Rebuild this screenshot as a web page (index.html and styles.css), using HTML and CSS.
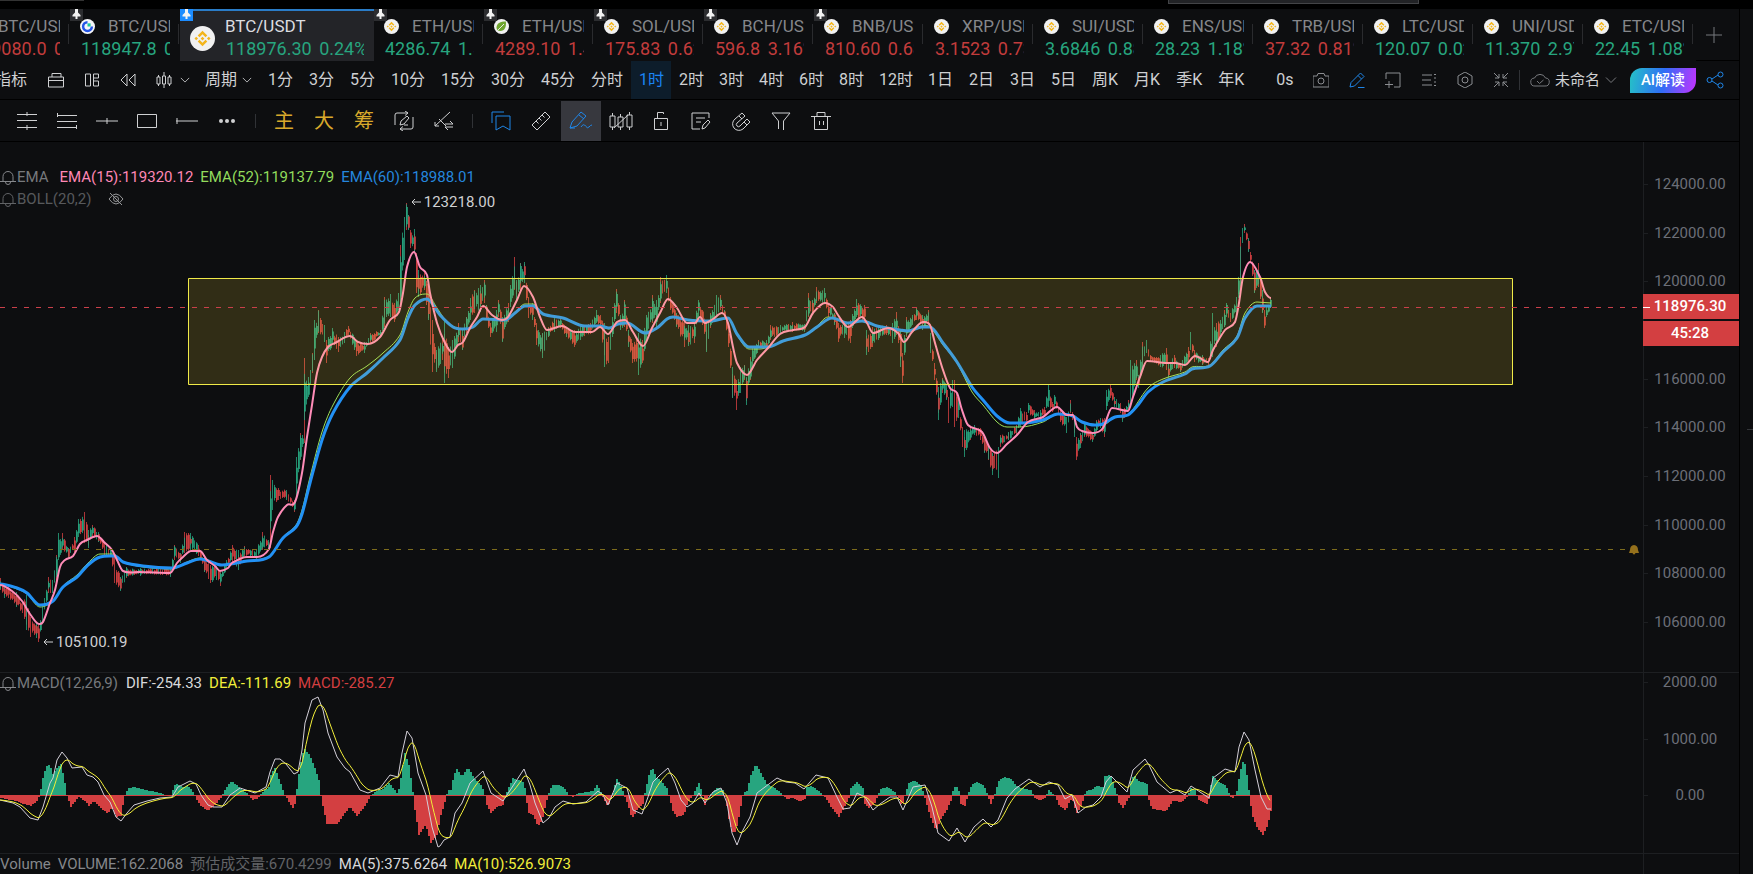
FILE: index.html
```
<!DOCTYPE html>
<html lang="zh-CN">
<head>
  <meta charset="utf-8">
  <title>BTC/USDT 118976.30</title>
  <link rel="stylesheet" href="styles.css">
</head>
<body>
  <svg class="sprite" xmlns="http://www.w3.org/2000/svg">
    <symbol id="bnb" viewBox="0 0 24 24">
      <circle cx="12" cy="12" r="12" fill="#f1f1f1"/>
      <g fill="#f3b51c">
        <path d="M12 4.500l4.600 4.600-1.700 1.700L12 7.900l-2.900 2.900-1.700-1.700zM12 19.500l4.600-4.600-1.700-1.700-2.900 2.900-2.900-2.900-1.700 1.700z"/>
        <path d="M12 10.200l1.800 1.800-1.800 1.800-1.800-1.800zM6 10.300L7.700 12 6 13.700 4.300 12zM18 10.300l1.700 1.700-1.700 1.700-1.700-1.700z"/>
      </g>
    </symbol>
    <symbol id="gate" viewBox="0 0 24 24">
      <circle cx="12" cy="12" r="12" fill="#f4f5f8"/>
      <path d="M12 5a7 7 0 1 0 7 7" fill="none" stroke="#2354e6" stroke-width="4"/>
      <path d="M12 7h5v5h-5z" fill="#17c99b"/>
    </symbol>
    <symbol id="leaf" viewBox="0 0 24 24">
      <circle cx="12" cy="12" r="12" fill="#f1f1f1"/>
      <path d="M4 14C4 7 10 4 19 4c1 9-2 15-9 15-4 0-6-2-6-5z" fill="#6fa52f"/>
      <path d="M6 18L16 8" stroke="#f1f1f1" stroke-width="1.500"/>
    </symbol>
    <symbol id="pin" viewBox="0 0 13 12">
      <path d="M5 0h3v3.500L10.500 6v1.500H7.500V10h-2V7.500h-3V6L5 3.500z" fill="#f2f2f2"/>
    </symbol>
    <symbol id="chevron" viewBox="0 0 12 8">
      <path d="M1 1.500l5 5 5-5"/>
    </symbol>
    <symbol id="bell" viewBox="0 0 16 16">
      <path d="M3 12V7.500a5 5 0 0 1 10 0V12M0 12.500h16M5.500 13a2.500 2.500 0 0 0 5 0"/>
    </symbol>
  </svg>

  <div class="window-top">
    <span class="window-line"></span>
    <span class="window-panel"></span>
  </div>

  <div class="workspace">
    <main class="terminal">
      <nav class="tabs">
        <div class="tab-list">
          <button class="tab">
            <svg class="coin"><use href="#bnb"/></svg><span class="name">BTC/USDT</span>
            <span class="quote down">119080.0 <span>0.12%</span></span>
          </button>
          <button class="tab">
            <svg class="pin"><use href="#pin"/></svg>
            <svg class="coin"><use href="#gate"/></svg><span class="name">BTC/USDT</span>
            <span class="quote up">118947.8 <span>0.21%</span></span>
          </button>
          <button class="tab active">
            <svg class="pin"><use href="#pin"/></svg>
            <svg class="coin"><use href="#bnb"/></svg><span class="name">BTC/USDT</span>
            <span class="quote up">118976.30 <span>0.24%</span></span>
          </button>
          <button class="tab">
            <svg class="pin"><use href="#pin"/></svg>
            <svg class="coin"><use href="#bnb"/></svg><span class="name">ETH/USDT</span>
            <span class="quote up">4286.74 <span>1.50%</span></span>
          </button>
          <button class="tab">
            <svg class="pin"><use href="#pin"/></svg>
            <svg class="coin"><use href="#leaf"/></svg><span class="name">ETH/USDT</span>
            <span class="quote down">4289.10 <span>1.42%</span></span>
          </button>
          <button class="tab">
            <svg class="pin"><use href="#pin"/></svg>
            <svg class="coin"><use href="#bnb"/></svg><span class="name">SOL/USDT</span>
            <span class="quote down">175.83 <span>0.62%</span></span>
          </button>
          <button class="tab">
            <svg class="pin"><use href="#pin"/></svg>
            <svg class="coin"><use href="#bnb"/></svg><span class="name">BCH/USDT</span>
            <span class="quote down">596.8 <span>3.16%</span></span>
          </button>
          <button class="tab">
            <svg class="pin"><use href="#pin"/></svg>
            <svg class="coin"><use href="#bnb"/></svg><span class="name">BNB/USDT</span>
            <span class="quote down">810.60 <span>0.68%</span></span>
          </button>
          <button class="tab">
            <svg class="coin"><use href="#bnb"/></svg><span class="name">XRP/USDT</span>
            <span class="quote down">3.1523 <span>0.73%</span></span>
          </button>
          <button class="tab">
            <svg class="coin"><use href="#bnb"/></svg><span class="name">SUI/USDT</span>
            <span class="quote up">3.6846 <span>0.88%</span></span>
          </button>
          <button class="tab">
            <svg class="coin"><use href="#bnb"/></svg><span class="name">ENS/USDT</span>
            <span class="quote up">28.23 <span>1.18%</span></span>
          </button>
          <button class="tab">
            <svg class="coin"><use href="#bnb"/></svg><span class="name">TRB/USDT</span>
            <span class="quote down">37.32 <span>0.81%</span></span>
          </button>
          <button class="tab">
            <svg class="coin"><use href="#bnb"/></svg><span class="name">LTC/USDT</span>
            <span class="quote up">120.07 <span>0.02%</span></span>
          </button>
          <button class="tab">
            <svg class="coin"><use href="#bnb"/></svg><span class="name">UNI/USDT</span>
            <span class="quote up">11.370 <span>2.97%</span></span>
          </button>
          <button class="tab">
            <svg class="coin"><use href="#bnb"/></svg><span class="name">ETC/USDT</span>
            <span class="quote up">22.45 <span>1.08%</span></span>
          </button>
        </div>
        <button class="add-tab" aria-label="添加">
          <svg class="icon" viewBox="0 0 16 16"><path d="M8 0v16M0 8h16"/></svg>
        </button>
      </nav>

      <div class="toolbar">
        <button class="label indicators">指标</button>
        <button class="tool" aria-label="模板"><svg class="icon" viewBox="0 0 16 16"><path d="M.5 5h15v10H.5zM.5 8.500h15M4 5V1.500h9V5"/></svg></button>
        <button class="tool" aria-label="布局"><svg class="icon" viewBox="0 0 16 16"><path d="M1.500 2h5v12h-5zM9.500 2h5v4h-5zM9.500 9h5v5h-5zM9.500 6v3"/></svg></button>
        <button class="tool" aria-label="回放"><svg class="icon" viewBox="0 0 16 16"><path d="M7 2v12L1 8zM15 2v12L9 8z"/></svg></button>
        <button class="menu" aria-label="K线类型">
          <svg class="icon" viewBox="0 0 16 16"><path d="M1 5h3v7H1zM6.500 4h3v8h-3zM12 5h3v7h-3zM2.500 3v2M2.500 12v2M8 0v4M8 12v4M13.500 3v2M13.500 12v2"/></svg>
          <svg class="icon chevron"><use href="#chevron"/></svg>
        </button>
        <button class="menu period">周期 <svg class="icon chevron"><use href="#chevron"/></svg></button>
        <div class="intervals">
          <button>1分</button>
          <button>3分</button>
          <button>5分</button>
          <button>10分</button>
          <button>15分</button>
          <button>30分</button>
          <button>45分</button>
          <button>分时</button>
        </div>
        <div class="intervals hours">
          <button class="active">1时</button>
          <button>2时</button>
          <button>3时</button>
          <button>4时</button>
          <button>6时</button>
          <button>8时</button>
          <button>12时</button>
        </div>
        <div class="intervals">
          <button>1日</button>
          <button>2日</button>
          <button>3日</button>
          <button>5日</button>
          <button>周K</button>
          <button>月K</button>
          <button>季K</button>
          <button>年K</button>
        </div>

        <div class="actions">
          <button class="tool label">0s</button>
          <button class="tool dim" aria-label="截图"><svg class="icon" viewBox="0 0 16 16"><path d="M0 4h4l1-2.500h6L12 4h4v11H0zM11 9a3 3 0 1 1-6 0 3 3 0 0 1 6 0z"/></svg></button>
          <button class="tool blue" aria-label="画线"><svg class="icon" viewBox="0 0 16 16"><path d="M1 15l1-4.500L11.500 1l3.500 3.500L5.500 14zM9 3.500L12.500 7M9 15.500h6.500"/></svg></button>
          <button class="tool dim" aria-label="添加窗格"><svg class="icon" viewBox="0 0 16 16"><path d="M1 7V1h14v14H9M4 9v7M0 12.500h8"/></svg></button>
          <button class="tool dim" aria-label="列表"><svg class="icon" viewBox="0 0 16 16"><path d="M1 3h10M1 8h9M1 13h10M13 2.500h2M13 6h2M13 10h2M13 13.500h2"/></svg></button>
          <button class="tool dim" aria-label="设置"><svg class="icon" viewBox="0 0 16 16"><path d="M8 0l7 4v8l-7 4-7-4V4zM11 8a3 3 0 1 1-6 0 3 3 0 0 1 6 0z"/></svg></button>
          <button class="tool dim" aria-label="退出全屏"><svg class="icon" viewBox="0 0 16 16"><path d="M1 1l5 5M6 2v4H2M15 1l-5 5M10 2v4h4M1 15l5-5M6 14v-4H2M15 15l-5-5M10 14v-4h4"/></svg></button>
          <span class="divider"></span>
          <button class="layout-name">
            <svg class="icon cloud" viewBox="0 0 20 16"><path d="M5 14a4 4 0 0 1-.5-8 6 6 0 0 1 11 0 4 4 0 0 1-.5 8zM7 9l2.500 2.500L13.500 8"/></svg>
            未命名
            <svg class="icon chevron"><use href="#chevron"/></svg>
          </button>
          <button class="ai">AI解读</button>
          <button class="share blue" aria-label="分享"><svg class="icon" viewBox="0 0 18 18"><path d="M6 8l6-4M6 10l6 4M6 9a2.500 2.500 0 1 1-5 0 2.500 2.500 0 0 1 5 0zM17 3.500a2.500 2.500 0 1 1-5 0 2.500 2.500 0 0 1 5 0zM17 14.500a2.500 2.500 0 1 1-5 0 2.500 2.500 0 0 1 5 0z"/></svg></button>
        </div>
      </div>

      <div class="drawbar">
        <button aria-label="平行线"><svg class="icon" viewBox="0 0 20 20"><path d="M0 3.500h20M0 9.500h20M0 16.500h20M10 1v4M10 14v5"/></svg></button>
        <button aria-label="通道"><svg class="icon" viewBox="0 0 20 20"><path d="M0 4.500h20M0 10.500h20M0 16.500h20M.5 2v4M19.500 14v4"/></svg></button>
        <button aria-label="水平线"><svg class="icon wide" viewBox="0 0 22 20"><path d="M0 10h22M11 7v6"/></svg></button>
        <button aria-label="矩形"><svg class="icon" viewBox="0 0 20 20"><path d="M.5 3.500h19v13H.5z"/></svg></button>
        <button aria-label="射线"><svg class="icon wide" viewBox="0 0 22 20"><path d="M0 10h22M1 7v6"/></svg></button>
        <button aria-label="更多"><svg class="icon solid" viewBox="0 0 20 20"><circle cx="4" cy="10" r="2"/><circle cx="10" cy="10" r="2"/><circle cx="16" cy="10" r="2"/></svg></button>
        <span class="divider"></span>
        <button class="gold">主</button>
        <button class="gold">大</button>
        <button class="gold">筹</button>
        <button aria-label="同步画线"><svg class="icon" viewBox="0 0 20 20"><path d="M1 14V4q0-2 2-2h11M11 0l3 2-3 2.500M19 6v10q0 2-2 2H6M9 15.500L6 18l3 2M6 14l1-4 6-5 2 2-5 6zM10 14h4"/></svg></button>
        <button aria-label="切换画线"><svg class="icon" viewBox="0 0 20 20"><path d="M1 15L16 1M1 11v4h4M5 8l7 7M11 13h8l-3-3M19 16h-8l3 3"/></svg></button>
        <span class="divider"></span>
        <button class="blue" aria-label="收藏"><svg class="icon" viewBox="0 0 20 20"><path d="M5 5h14v14l-7-4-7 4zM1 12V1h12"/></svg></button>
        <button aria-label="测量"><svg class="icon" viewBox="0 0 20 20"><path d="M1 14L14 1l5 5L6 19zM5 10l2.500 2.500M8 7l2.500 2.500M11 4l2.500 2.500"/></svg></button>
        <button class="blue active" aria-label="画笔"><svg class="icon pen" viewBox="0 0 24 20"><path d="M1 17l2-6L12 1l5 4-9 10zM10 4l5 4M1 17h5M12 16q2.500-4 4.500-1t3.500 1 3-2"/></svg></button>
        <button aria-label="K线"><svg class="icon pen" viewBox="0 0 24 20"><path d="M1 5h5v11H1zM9 6h5v10H9zM18 4h5v12h-5zM3.500 2v3M3.500 16v3M11.500 3v3M11.500 16v3M20.500 1v3M20.500 16v3M5 17L19 4"/></svg></button>
        <button aria-label="锁定"><svg class="icon" viewBox="0 0 20 20"><path d="M3.500 7.500h13v11h-13zM6.500 7V1.500h6V3M10 11v4"/></svg></button>
        <button aria-label="笔记"><svg class="icon" viewBox="0 0 20 20"><path d="M9 18H1V2h17v5M5 7h9M5 11h5M11 18l1-4 5-5 2 2-5 6z"/></svg></button>
        <button aria-label="磁铁"><svg class="icon" viewBox="0 0 20 20"><path d="M11 2L4 8a6 6 0 0 0 8 10l7-7-3-3-7 7a2 2 0 0 1-3-3l8-7zM8 5l3 3M13 11l3 3"/></svg></button>
        <button aria-label="筛选"><svg class="icon" viewBox="0 0 20 20"><path d="M1 2h18l-6.500 8v9M1 2l6.500 8v8"/></svg></button>
        <button aria-label="删除"><svg class="icon" viewBox="0 0 20 20"><path d="M0 5.500h20M3.500 5.500v13h13v-13M6 5V1.500h8V5M8.500 10v4M12.500 10v4"/></svg></button>
      </div>

      <section class="pane price-pane">
        <div class="plot">
          <svg id="price" class="chart" viewBox="0 0 1643 530" preserveAspectRatio="none">
            <path id="candles-down" class="candle down"/>
            <path id="candles-up" class="candle up"/>
            <path id="bodies-down" class="body down"/>
            <path id="bodies-up" class="body up"/>
            <path id="ema52" class="ema52"/>
            <path id="ema60" class="ema60"/>
            <path id="ema15" class="ema15"/>
            <rect class="zone" x="188.500" y="136.500" width="1324" height="106"/>
            <path class="last-price" d="M0 165.500H1643"/>
            <path class="alert" d="M0 407.500H1628"/>
          </svg>
          <div class="legend">
            <div class="row">
              <svg class="icon bell"><use href="#bell"/></svg><span class="title">EMA</span>
              <span class="pink">EMA(15):119320.12</span>
              <span class="lime">EMA(52):119137.79</span>
              <span class="sky">EMA(60):118988.01</span>
            </div>
            <div class="row faded">
              <svg class="icon bell"><use href="#bell"/></svg><span class="title">BOLL(20,2)</span>
              <svg class="icon eye" viewBox="0 0 16 16"><path d="M1 8q7-10 14 0-7 10-14 0zM10.500 8a2.500 2.500 0 1 1-5 0 2.500 2.500 0 0 1 5 0zM2 2l12 12"/></svg>
            </div>
          </div>
          <span class="mark high"><svg class="icon" viewBox="0 0 10 8"><path d="M10 4H1M4 1L1 4l3 3"/></svg>123218.00</span>
          <span class="mark low"><svg class="icon" viewBox="0 0 10 8"><path d="M10 4H1M4 1L1 4l3 3"/></svg>105100.19</span>
          <svg class="alert-bell" viewBox="0 0 10 10"><path d="M5 0q4 .5 4 5l1 3H6.500q-1.500 3-3 0H0l1-3q0-4.500 4-5z"/></svg>
        </div>
        <div class="axis price-axis">
          <span>124000.00</span>
          <span>122000.00</span>
          <span>120000.00</span>
          <span class="blank"></span>
          <span>116000.00</span>
          <span>114000.00</span>
          <span>112000.00</span>
          <span>110000.00</span>
          <span>108000.00</span>
          <span>106000.00</span>
          <div class="tag">
            <b>118976.30</b>
            <b>45:28</b>
          </div>
        </div>
      </section>

      <section class="pane macd-pane">
        <div class="plot">
          <svg id="macd" class="chart" viewBox="0 0 1643 180" preserveAspectRatio="none">
            <path id="hist-down" class="hist down"/>
            <path id="hist-up" class="hist up"/>
            <path id="dif" class="dif"/>
            <path id="dea" class="dea"/>
          </svg>
          <div class="legend">
            <div class="row">
              <svg class="icon bell"><use href="#bell"/></svg><span class="title">MACD(12,26,9)</span>
              <span class="white">DIF:-254.33</span>
              <span class="yellow">DEA:-111.69</span>
              <span class="red">MACD:-285.27</span>
            </div>
          </div>
        </div>
        <div class="axis macd-axis">
          <span>2000.00</span>
          <span>1000.00</span>
          <span>0.00</span>
        </div>
      </section>

      <section class="pane volume-pane">
        <div class="plot">
          <div class="row">
            <span>Volume</span>
            <span>VOLUME:162.2068</span>
            <span class="faded">预估成交量:670.4299</span>
            <span class="white">MA(5):375.6264</span>
            <span class="yellow">MA(10):526.9073</span>
          </div>
        </div>
        <div class="axis"></div>
      </section>
    </main>
    <aside class="side"><span class="handle"></span></aside>
  </div>

  <script src="chart.js"></script>
</body>
</html>
```
FILE: styles.css
```
:root {
  --bg: #0d0e10;
  --line: #000;
  --grid: #1d1f22;
  --text: #cfd0d2;
  --muted: #85878b;
  --axis: #6c6f78;
  --green: #27a57f;
  --red: #d33f41;
  --blue: #1f86e8;
  --yellow: #f2ee3a;
}

* {
  box-sizing: border-box;
}

body {
  margin: 0;
  height: 100vh;
  display: flex;
  flex-direction: column;
  overflow: hidden;
  background: var(--bg);
  color: var(--text);
  font: 15px/18px Roboto, "Noto Sans CJK SC", sans-serif;
}

button {
  margin: 0;
  padding: 0;
  border: 0;
  background: none;
  color: inherit;
  font: inherit;
  white-space: nowrap;
  cursor: pointer;
}

.sprite {
  display: none;
}

.icon {
  display: block;
  flex: none;
  width: 16px;
  height: 16px;
  fill: none;
  stroke: currentColor;
}

.icon.chevron {
  width: 10px;
  height: 8px;
}

.window-top {
  flex: none;
  height: 9px;
  display: flex;
  justify-content: space-between;
  align-items: flex-start;
  background: #000;
}

.window-line {
  width: 84px;
  height: 1px;
  background: #333;
}

.window-panel {
  width: 251px;
  height: 4px;
  margin-right: 334px;
  border: 1px solid #434447;
  border-top: 0;
  background: #222326;
}

.workspace {
  flex: 1;
  min-height: 0;
  display: flex;
}

.terminal {
  flex: 1;
  min-width: 0;
  display: flex;
  flex-direction: column;
}

.side {
  flex: none;
  width: 14px;
  padding-bottom: 24px;
  border-left: 1px solid var(--line);
  display: flex;
  align-items: center;
  justify-content: flex-end;
}

.handle {
  width: 6px;
  height: 1px;
  background: #34363a;
}

/* symbol tabs */
.tabs {
  flex: none;
  height: 52px;
  display: flex;
}

.tab-list {
  flex: 1;
  min-width: 0;
  display: flex;
  overflow: hidden;
}

.tab {
  position: relative;
  flex: none;
  width: 110px;
  padding: 6px 10px 0;
  display: grid;
  grid-template-columns: 15px 1fr;
  grid-template-rows: 22px 24px;
  column-gap: 13px;
  align-items: center;
  text-align: left;
}

.tab:first-child {
  margin-left: -40px;
}

.tab::after {
  content: '';
  position: absolute;
  right: 1px;
  top: 15px;
  width: 1px;
  height: 20px;
  background: #2a2b2e;
}

.coin {
  width: 15px;
  height: 15px;
}

.name {
  overflow: hidden;
  color: var(--muted);
  font-size: 17px;
  line-height: 22px;
}

.quote {
  grid-column: 1 / 3;
  padding-left: 1px;
  overflow: hidden;
  font-size: 18px;
  line-height: 24px;
}

.quote span {
  margin-left: 3px;
}

.quote.up {
  color: var(--green);
}

.quote.down {
  color: #c23c3c;
}

.pin {
  position: absolute;
  left: 0;
  top: 0;
  width: 13px;
  height: 12px;
  background: #2c2d30;
}

.tab.active {
  width: 194px;
  padding-top: 4px;
  border-top: 2px solid #2a7cc7;
  grid-template-columns: 25px 1fr;
  column-gap: 10px;
  background: #232428;
}

.tab.active::after {
  display: none;
}

.tab.active .coin {
  grid-row: 1 / 3;
  width: 25px;
  height: 25px;
}

.tab.active .name {
  color: #dcdde0;
}

.tab.active .quote {
  grid-column: 2;
}

.tab.active .pin {
  top: -2px;
  background: #1c8cff;
}

.add-tab {
  width: 43px;
  margin-left: 2px;
  padding-left: 10px;
  border-bottom: 1px solid var(--line);
  color: #77797d;
}

/* period toolbar */
.toolbar {
  flex: none;
  height: 39px;
  display: flex;
  align-items: stretch;
  border-bottom: 1px solid var(--line);
  font-size: 16px;
}

.indicators {
  margin-left: -5px;
  padding-right: 11px;
}

.tool {
  width: 36px;
  display: flex;
  align-items: center;
  justify-content: center;
}

.menu {
  padding: 0 7px 0 10px;
  display: flex;
  align-items: center;
  gap: 8px;
}

.menu.period {
  gap: 5px;
  padding: 0 8px;
}

.intervals {
  display: flex;
}

.intervals button {
  padding: 0 8px;
}

.intervals.hours button {
  padding-right: 7px;
}

.intervals .active {
  background: #0d1d2b;
  color: #1a84f5;
}

.actions {
  margin-left: auto;
  padding-right: 15px;
  display: flex;
  align-items: center;
}

.dim {
  color: #8b8d91;
}

.blue {
  color: var(--blue);
}

.divider {
  flex: none;
  width: 1px;
  height: 20px;
  background: #303236;
}

.layout-name {
  padding: 0 13px 0 10px;
  display: flex;
  align-items: center;
  gap: 5px;
  font-size: 15px;
}

.layout-name .icon {
  color: #77797d;
}

.layout-name .chevron {
  width: 12px;
}

.icon.cloud {
  width: 20px;
}

.ai {
  width: 66px;
  height: 25px;
  border-radius: 12px 0;
  background: linear-gradient(100deg, #25c3c6, #2f6df6 50%, #c532ff);
  color: #fff;
  font-size: 15px;
  font-weight: 500;
}

.share {
  margin-left: 10px;
}

.share .icon {
  width: 18px;
  height: 18px;
}

/* drawing toolbar */
.drawbar {
  flex: none;
  height: 42px;
  padding-left: 7px;
  display: flex;
  align-items: center;
  border-bottom: 1px solid var(--line);
}

.drawbar button {
  width: 40px;
  height: 40px;
  display: flex;
  align-items: center;
  justify-content: center;
}

.drawbar .icon {
  width: 20px;
  height: 20px;
}

.drawbar .icon.wide {
  width: 22px;
}

.drawbar .icon.pen {
  width: 24px;
}

.drawbar .icon.solid {
  fill: currentColor;
  stroke: none;
}

.drawbar .divider {
  height: 14px;
  margin: 0 8px;
}

.drawbar .active {
  background: #37383e;
}

.gold {
  color: #d9a92b;
  font-size: 20px;
}

/* chart panes */
.pane {
  display: flex;
  min-height: 0;
}

.price-pane {
  flex: 530;
}

.macd-pane {
  flex: 180;
  border-top: 1px solid var(--grid);
}

.volume-pane {
  flex: none;
  height: 21px;
  border-top: 1px solid var(--grid);
  color: var(--muted);
}

.plot {
  position: relative;
  flex: 1;
  min-width: 0;
}

.chart {
  position: absolute;
  inset: 0;
  width: 100%;
  height: 100%;
}

.chart path,
.chart rect {
  fill: none;
  vector-effect: non-scaling-stroke;
}

.candle,
.body {
  opacity: 0.8;
}

.candle {
  stroke-width: 1;
}

.body {
  stroke-width: 2;
}

.candle.up,
.body.up {
  stroke: var(--green);
}

.candle.down,
.body.down {
  stroke: var(--red);
}

.chart .hist {
  shape-rendering: crispEdges;
}

.chart .hist.up {
  fill: var(--green);
}

.chart .hist.down {
  fill: var(--red);
}

.ema15 {
  stroke: #ff8cb8;
  stroke-width: 2;
}

.ema52 {
  stroke: #9be05a;
}

.ema60 {
  stroke: #2291f5;
  stroke-width: 3;
}

.ema15,
.ema60 {
  stroke-linejoin: round;
}

.chart .zone {
  fill: rgba(255, 225, 59, 0.15);
  stroke: #f0ea48;
}

.last-price {
  stroke: #c9404a;
  stroke-dasharray: 5 7;
}

.alert {
  stroke: #7d6c1d;
  stroke-dasharray: 5 7;
}

.dif {
  stroke: #d3cfd8;
}

.dea {
  stroke: var(--yellow);
}

.legend {
  position: relative;
}

.price-pane .legend {
  padding-top: 24px;
}

.row {
  display: flex;
  align-items: center;
  gap: 7px;
  height: 22px;
  white-space: nowrap;
}

.macd-pane .row,
.volume-pane .row {
  height: 20px;
}

.legend .bell {
  margin-right: -6px;
  color: var(--muted);
}

.legend .title {
  margin-right: 1px;
  color: #77797d;
}

.price-pane .title {
  margin-right: 4px;
}

.row.faded,
.row .faded {
  opacity: 0.7;
}

.eye {
  margin-left: 6px;
}

.pink {
  color: #ff87b5;
}

.lime {
  color: #92dc5c;
}

.sky {
  color: #2586dd;
}

.white {
  color: #d8d9db;
}

.yellow {
  color: var(--yellow);
}

.red {
  color: var(--red);
}

/* labels pinned to the extremes of the series */
.mark {
  position: absolute;
  display: flex;
  align-items: center;
  gap: 3px;
  line-height: 14px;
}

.mark .icon {
  width: 10px;
  height: 8px;
}

.mark.high {
  left: 25%;
  top: 10%;
}

.mark.low {
  left: 43px;
  top: 93%;
}

.alert-bell {
  position: absolute;
  right: 4px;
  top: 76%;
  width: 10px;
  height: 10px;
  fill: #94701c;
}

.axis {
  position: relative;
  flex: none;
  width: 96px;
  border-left: 1px solid var(--grid);
  display: flex;
  flex-direction: column;
  justify-content: space-between;
  color: var(--axis);
  text-align: center;
}

.axis span {
  position: relative;
  height: 18px;
  padding-right: 3px;
}

.axis span::before {
  content: '';
  position: absolute;
  left: 0;
  top: 9px;
  width: 4px;
  height: 1px;
  background: var(--grid);
}

.price-axis {
  padding: 33px 0 41px;
}

.macd-axis {
  padding-bottom: 49px;
}

.tag {
  position: absolute;
  left: -1px;
  right: 0;
  top: 152px;
  display: grid;
  gap: 2px;
  color: #fff;
}

.tag b {
  position: relative;
  padding-right: 2px;
  background: var(--red);
  font-weight: 500;
  line-height: 25px;
}

.tag b:first-child::before {
  content: '';
  position: absolute;
  left: 0;
  top: 13px;
  width: 7px;
  height: 1px;
  background: #fff;
}
```
FILE: chart.js
```
// Series are stored as "x,y" pairs in plot coordinates.
const ema15 = `0,585 12,591 22,601 30,614 39,624 43,622 50,603 55,590 60,567 65,560 73,556 80,544 87,540
97,536 105,543 112,550 117,560 123,571 140,572 170,573 177,563 183,557 191,551 200,551 207,560 215,566
220,571 228,568 232,563 247,557 257,557 269,549 273,532 278,517 287,505 295,502 302,473 307,437 312,405
317,373 322,357 328,347 335,343 350,336 358,342 368,344 380,337 390,320 399,312 403,293 407,267 414,252
420,267 427,275 430,293 437,323 445,343 452,352 458,345 463,342 470,328 477,317 483,306 492,315 502,320
508,317 517,300 524,286 533,297 540,317 547,330 562,326 575,332 592,332 600,327 608,334 617,322 625,320
633,332 643,346 652,328 660,313 668,299 677,308 687,323 695,323 700,317 705,323 713,319 722,313 728,323
733,347 737,363 747,375 757,360 768,348 780,334 793,330 805,327 813,313 825,303 833,307 838,315 848,327
862,317 867,323 873,333 888,328 898,333 904,342 912,332 923,322 930,325 935,343 942,367 950,388 957,393
962,410 968,425 982,432 990,448 997,453 1007,444 1017,435 1028,422 1043,417 1057,407 1067,415 1073,415
1077,427 1082,431 1093,433 1103,428 1112,408 1128,411 1133,397 1140,377 1147,361 1167,363 1175,363
1185,365 1195,356 1208,362 1213,350 1225,330 1235,322 1239,303 1243,277 1250,262 1260,277 1265,292 1271,298`;

const ema60 = `0,584 17,588 27,593 40,605 53,601 63,587 77,577 88,565 100,557 115,556 123,562 143,566
172,568 187,563 200,559 222,565 247,561 269,557 283,538 296,527 302,514 310,483 322,440 333,413 350,387
367,373 383,358 400,340 408,318 415,305 427,299 440,315 453,327 463,329 473,327 483,319 505,320 515,313
525,306 533,306 543,314 563,318 585,326 600,326 609,328 618,324 627,323 645,333 657,328 667,319 673,317
688,320 710,321 728,318 737,334 749,347 768,347 783,341 805,335 817,327 832,318 848,323 862,321 877,326
900,330 908,331 922,327 930,327 943,343 957,362 972,387 983,400 997,416 1010,423 1023,423 1043,420
1058,414 1073,416 1082,422 1095,425 1103,424 1115,417 1128,415 1138,405 1148,392 1163,382 1185,374
1192,369 1210,366 1223,352 1237,338 1245,318 1257,306 1271,306`;

const ema52 = `0,584 17,589 27,594 40,607 53,601 63,586 77,575 88,563 100,554 113,554 123,562 143,567
172,569 187,562 200,558 222,565 247,561 269,556 283,537 296,525 302,510 310,477 322,432 333,405 350,378
367,366 383,353 400,335 408,312 415,298 427,294 437,308 448,323 463,329 473,327 483,319 505,320 515,312
525,304 533,304 543,314 563,318 585,326 600,326 609,329 618,324 627,323 645,333 657,328 667,319 673,317
688,320 710,321 728,318 737,335 749,349 760,349 768,347 783,341 805,335 817,326 828,317 848,323 862,321
877,326 900,331 908,332 922,326 930,327 943,345 957,363 972,392 983,405 997,422 1007,427 1020,427
1043,422 1058,414 1073,416 1082,422 1103,425 1115,417 1128,415 1148,388 1163,379 1185,372 1192,367
1210,365 1223,350 1237,336 1245,313 1257,302 1271,303`;

// x,high,low
const range = `0,578,590 4,585,598 8,587,598 15,592,607 22,603,613 25,595,630 30,617,637 35,623,638 38,625,642
42,607,622 48,577,593 52,580,593 55,555,580 57,533,560 62,533,550 68,548,558 73,537,552 78,519,537
83,512,543 87,530,548 92,525,537 98,532,542 103,542,557 110,547,557 114,557,583 120,577,591 126,567,578
140,568,576 160,568,575 170,568,577 173,545,560 180,553,563 183,532,553 190,533,550 197,545,556
203,558,572 209,565,583 215,566,580 219,572,586 225,560,568 232,545,563 237,550,570 243,546,556
255,550,560 262,532,550 268,540,548 270,475,548 272,480,510 278,488,500 286,490,500 293,500,512
296,457,497 299,433,460 302,435,447 304,358,443 307,377,397 311,353,373 314,320,360 318,310,333
323,325,342 326,340,363 331,328,345 337,337,352 343,332,343 348,326,335 353,337,350 356,340,356
363,342,353 370,333,343 380,330,336 384,297,327 390,294,317 394,303,322 398,293,310 400,245,303
403,217,260 405,203,230 408,215,230 410,230,248 413,229,253 416,253,293 418,270,297 424,272,290
428,280,320 431,320,372 436,350,372 441,337,360 444,320,383 448,347,378 452,340,368 457,323,342
462,330,350 466,317,333 469,298,320 474,290,313 480,285,312 483,280,303 486,305,320 489,323,337
495,310,332 498,300,317 502,317,342 508,303,322 510,285,307 513,257,290 516,280,300 519,263,290
524,262,283 527,297,318 532,303,320 535,323,345 541,333,358 547,327,337 553,318,332 560,318,328
566,327,337 573,330,347 580,325,340 590,323,334 596,310,323 600,315,328 604,323,367 607,337,363
611,317,337 615,289,313 619,315,330 624,300,327 628,330,347 632,343,363 638,333,375 642,340,363
646,315,340 651,295,323 655,300,330 660,277,303 666,275,293 670,297,310 676,313,327 683,320,347
688,325,346 693,320,343 698,300,317 701,310,325 705,323,352 710,313,328 715,295,317 719,295,310
724,310,320 728,327,347 731,367,398 735,380,410 739,367,393 743,365,380 746,377,405 749,357,380
752,347,367 757,340,348 766,340,350 770,325,340 780,325,333 792,322,332 803,324,332 807,293,317
812,300,315 815,287,303 823,288,303 828,303,317 833,313,325 838,323,342 844,322,338 849,320,343
855,299,317 863,305,323 866,330,355 872,327,347 878,325,340 885,325,335 892,323,343 896,312,335
899,330,367 901,353,383 904,335,355 906,317,337 912,315,325 916,308,320 922,315,330 927,310,323
930,333,353 934,363,380 937,387,420 941,378,393 945,385,400 947,397,423 951,380,407 954,380,427
958,397,418 961,427,447 964,430,457 969,427,440 974,425,435 980,428,440 984,437,453 988,445,460
991,453,475 994,453,468 997,447,478 1000,435,447 1008,432,440 1015,425,435 1020,408,427 1025,412,422
1028,403,413 1033,410,420 1040,410,418 1044,407,417 1048,385,407 1051,402,412 1054,395,407
1060,410,422 1066,417,433 1070,400,413 1073,417,437 1076,437,460 1079,433,448 1084,423,437
1091,432,442 1096,420,432 1100,418,428 1103,418,437 1106,390,410 1109,385,398 1113,397,407
1120,403,413 1122,410,422 1127,400,410 1130,360,407 1136,360,380 1138,375,388 1141,342,370
1146,340,353 1150,355,362 1160,355,367 1165,348,370 1167,363,378 1173,355,368 1180,363,372
1187,347,363 1189,332,350 1194,350,362 1202,355,365 1208,358,365 1211,313,357 1215,323,347
1219,320,337 1224,310,327 1226,303,317 1230,313,322 1235,297,313 1239,237,293 1241,228,243
1244,224,233 1247,238,252 1250,252,263 1253,270,293 1257,263,287 1261,290,313 1263,310,328
1266,307,317 1270,298,308`;

const dif = `0,800 13,803 20,807 30,818 38,820 43,807 50,783 53,778 57,760 62,752 67,758 72,768 82,767 87,775
93,777 98,782 104,795 110,802 116,817 121,821 127,813 134,805 147,801 160,798 172,797 178,787 190,781
196,784 201,795 208,805 213,807 222,807 230,795 240,788 255,793 266,787 270,772 275,759 280,759 286,764
294,774 298,772 302,750 305,723 312,700 318,697 323,710 328,733 337,757 345,768 350,772 360,790 368,793
380,788 390,775 398,777 402,753 407,731 412,738 418,773 426,795 432,827 438,847 440,846 444,840 450,837
455,813 462,803 470,783 483,771 491,793 503,801 509,792 524,769 530,785 535,803 543,823 549,818 555,807
563,801 573,804 586,802 598,791 603,795 608,805 617,783 627,788 633,810 642,814 648,797 653,782 660,775
668,768 675,783 681,800 687,807 693,803 699,793 705,803 713,792 721,788 727,803 732,833 737,845 742,832
750,817 757,793 765,787 777,778 786,782 795,783 804,789 816,775 828,778 837,797 843,809 850,808 857,793
865,797 873,810 880,804 890,797 897,797 903,810 913,787 925,785 932,807 938,833 949,841 957,828 965,842
974,827 983,819 991,827 998,820 1007,798 1015,789 1029,779 1040,787 1049,782 1058,785 1065,799 1072,795
1078,813 1086,807 1093,805 1101,797 1106,782 1111,776 1118,783 1127,792 1133,770 1145,759 1149,765
1157,782 1170,793 1177,790 1185,795 1191,786 1197,790 1209,798 1213,778 1225,769 1235,772 1239,747
1244,732 1249,740 1255,770 1261,797 1267,809 1271,809`;

// x,height above the zero line
const hist = `0,-3 15,-6 22,-9 30,-11 37,-5 39,0 42,17 45,28 49,30 52,21 57,28 60,31 63,18 66,0 70,-12 78,-2
85,-7 88,-11 93,-6 100,-13 107,-19 111,-12 115,-22 120,-21 124,0 128,7 134,8 145,5 160,2 165,-1 171,0
173,10 176,11 182,8 187,9 193,2 195,-4 200,-11 207,-16 213,-11 220,-3 223,3 227,10 231,14 238,8 247,1
251,-5 257,-4 260,1 268,8 270,20 274,27 278,16 284,0 288,-7 292,-13 295,-7 296,6 299,28 303,47 308,41
313,30 318,15 320,0 323,-16 326,-29 337,-29 344,-18 349,-12 356,-21 363,-13 370,-1 374,3 382,6 388,12
395,4 397,0 400,17 404,42 408,30 412,3 414,-15 418,-40 425,-30 430,-48 436,-40 440,-20 445,-4 447,5
450,5 453,20 456,26 461,18 467,28 473,17 481,9 484,0 486,-10 490,-18 496,-12 502,-10 505,0 509,10
512,17 517,15 523,13 525,0 527,-17 532,-20 537,-31 541,-26 546,-5 549,6 552,10 559,10 563,7 567,1
572,-2 578,2 588,3 592,4 596,10 600,3 603,-4 607,-12 611,-2 614,10 616,16 620,9 624,-2 627,-10 631,-24
636,-15 642,-9 645,7 648,20 651,28 655,18 660,14 666,7 669,-3 671,-14 676,-22 683,-20 687,-7 692,0
695,6 698,12 701,3 704,-10 707,-2 712,3 717,8 722,5 725,-5 729,-30 733,-40 737,-28 741,-5 743,3 746,4
750,20 755,31 761,20 766,11 773,8 780,2 786,-4 793,-3 799,-7 804,-4 806,8 811,9 820,2 825,-3 830,-12
838,-22 843,-13 848,-3 850,7 856,13 862,7 864,-9 868,-13 874,-8 877,0 880,6 887,8 894,3 898,-3 901,-12
905,3 908,12 913,15 920,10 924,-3 929,-20 935,-36 941,-22 946,-15 950,-6 952,4 955,10 958,4 960,-9
964,-11 968,3 971,11 976,13 983,9 987,-1 990,-9 994,1 998,14 1003,18 1010,16 1017,8 1030,5 1034,-3
1039,-6 1044,-3 1048,5 1054,-1 1058,-10 1065,-16 1069,-5 1073,-6 1075,-20 1079,-14 1083,-3 1085,4
1092,6 1096,9 1102,8 1104,19 1109,20 1113,10 1116,1 1118,-8 1122,-13 1128,-3 1130,14 1133,20 1138,14
1146,11 1148,-5 1151,-14 1165,-16 1172,-6 1181,-7 1187,-1 1190,7 1195,4 1197,-5 1206,-9 1209,-1
1211,20 1217,14 1225,9 1230,-2 1233,-4 1236,4 1239,22 1243,37 1246,20 1249,-2 1251,-20 1256,-32
1262,-40 1267,-30 1270,-16`;

const PRICE_TOP = 142;
const MACD_TOP = 673;
const ZERO = 122;
const STEP = 2;
const END = 1271;

function parse(text) {
  return text.trim().split(/\s+/).map(p => p.split(',').map(Number));
}

function at(points, x, col) {
  let i = 1;
  while (i < points.length - 1 && points[i][0] < x) i++;
  const a = points[i - 1];
  const b = points[i];
  const t = Math.min(1, Math.max(0, (x - a[0]) / (b[0] - a[0])));
  return a[col] + (b[col] - a[col]) * t;
}

function setPath(id, d) {
  document.getElementById(id).setAttribute('d', d);
}

function line(points, top) {
  return 'M' + points.map(p => p[0] + ' ' + (p[1] - top)).join('L');
}

// rounded line through all points, flat tangents at the turning points
function curve(points, top) {
  const slope = i => {
    const a = points[i - 1];
    const b = points[i];
    const c = points[i + 1];
    if (!a || !c || (b[1] - a[1]) * (c[1] - b[1]) <= 0) return 0;
    return (c[1] - a[1]) / (c[0] - a[0]);
  };
  let d = `M${points[0][0]} ${points[0][1] - top}`;
  for (let i = 1; i < points.length; i++) {
    const [x0, y0] = points[i - 1];
    const [x1, y1] = points[i];
    const third = (x1 - x0) / 3;
    const c0 = y0 - top + slope(i - 1) * third;
    const c1 = y1 - top - slope(i) * third;
    d += `C${(x0 + third).toFixed(1)} ${c0.toFixed(1)} ${(x1 - third).toFixed(1)} ${c1.toFixed(1)} ${x1} ${y1 - top}`;
  }
  return d;
}

// small repeatable generator so the chart looks the same on every load
let seed = 7;
function rand() {
  seed = (seed * 16807) % 2147483647;
  return seed / 2147483647;
}

function drawCandles() {
  const points = parse(range).map(p => [Math.round(p[0] / STEP) * STEP, p[1], p[2]]);
  const wicks = { up: '', down: '' };
  const bodies = { up: '', down: '' };
  let last = 584;
  for (let x = 0; x < END; x += STEP) {
    const high = at(points, x, 1) - PRICE_TOP;
    const low = at(points, x, 2) - PRICE_TOP;
    const size = low - high;
    const mid = (high + low) / 2;
    const dir = mid + (rand() - 0.5) * 12 < last ? 'up' : 'down';
    const top = high + rand() * size * 0.3;
    const bottom = low - rand() * size * 0.3;
    wicks[dir] += `M${x + 0.5} ${top.toFixed(1)}V${bottom.toFixed(1)}`;
    if (rand() > 0.25) {
      bodies[dir] += `M${x + 1} ${(top + size * 0.1).toFixed(1)}V${(bottom - size * 0.1).toFixed(1)}`;
    }
    last = mid;
  }
  // the key extremes always keep their full wick
  points.forEach((p, i) => {
    wicks[i % 2 ? 'up' : 'down'] += `M${p[0] + 0.5} ${p[1] - PRICE_TOP}V${p[2] - PRICE_TOP}`;
  });
  setPath('candles-up', wicks.up);
  setPath('candles-down', wicks.down);
  setPath('bodies-up', bodies.up);
  setPath('bodies-down', bodies.down);
}

function drawMacd() {
  const bars = parse(hist);
  const fast = parse(dif);
  const slow = [];
  let up = `M0 ${ZERO}`;
  let down = `M0 ${ZERO}`;
  let avg = fast[0][1];
  for (let x = 0; x < END; x += STEP) {
    const h = Math.round(at(bars, x, 1));
    up += `V${ZERO - Math.max(h, 0)}H${x + STEP}`;
    down += `V${ZERO - Math.min(h, -1)}H${x + STEP}`;
    avg += (at(fast, x, 1) - avg) * 0.28;
    slow.push([x, Math.round(avg * 10) / 10]);
  }
  setPath('hist-up', up + `V${ZERO}Z`);
  setPath('hist-down', down + `V${ZERO}Z`);
  setPath('dif', line(fast, MACD_TOP));
  setPath('dea', line(slow, MACD_TOP));
}

setPath('ema15', curve(parse(ema15), PRICE_TOP));
setPath('ema52', curve(parse(ema52), PRICE_TOP));
setPath('ema60', curve(parse(ema60), PRICE_TOP));
drawCandles();
drawMacd();
```
